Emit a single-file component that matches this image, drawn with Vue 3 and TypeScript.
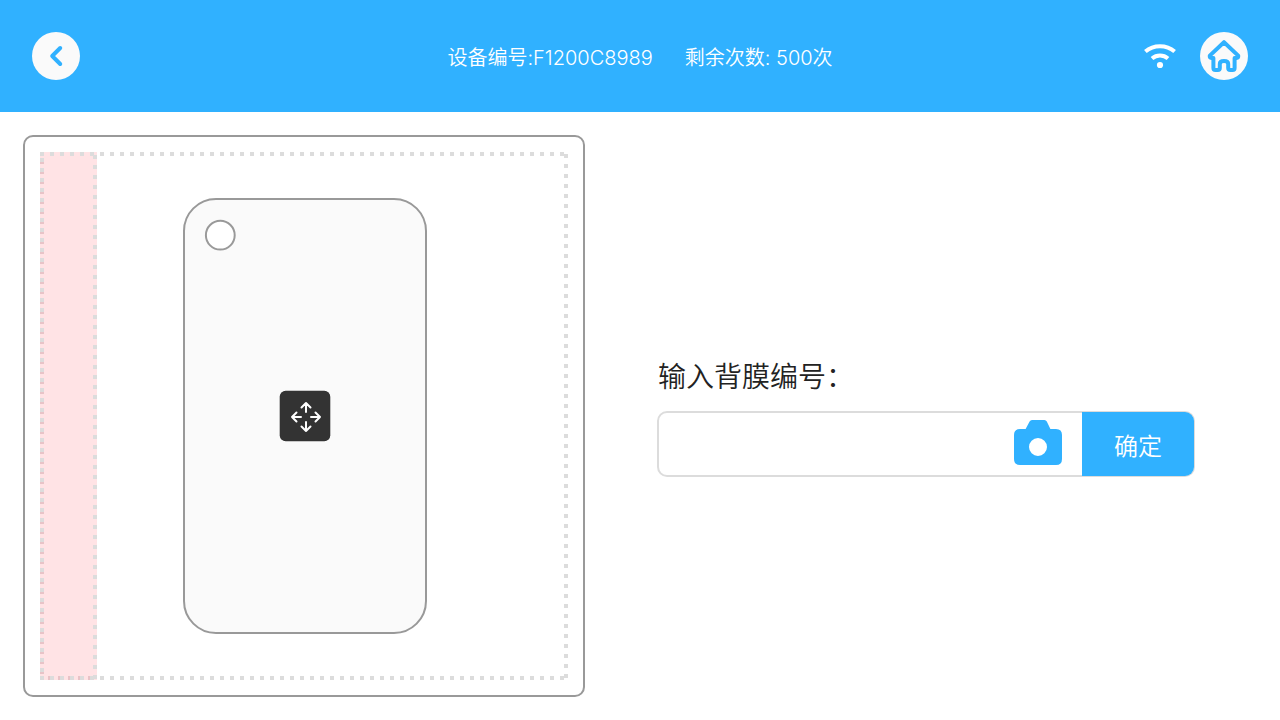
<script setup lang="ts">
import { ref } from 'vue'

const deviceId = 'F1200C8989'
const remaining = 500
const filmCode = ref('')
</script>

<template>
  <div class="page">
    <header class="bar">
      <button class="round" type="button" aria-label="返回">
        <svg viewBox="0 0 48 48" width="48" height="48">
          <path d="M28.2 16L20.2 24L28.2 32" fill="none" stroke="#30b1ff" stroke-width="4" stroke-linecap="round" stroke-linejoin="round" />
        </svg>
      </button>
      <div class="status">
        <span>设备编号:<span class="value">{{ deviceId }}</span></span>
        <span>剩余次数: <span class="value">{{ remaining }}</span>次</span>
      </div>
      <div class="tools">
        <svg class="wifi" viewBox="0 0 32 32" width="32" height="32" aria-hidden="true">
          <g fill="none" stroke="#fff" stroke-width="4">
            <path d="M1.4 11.6C9.6 4.4 22.4 4.4 30.6 11.6" />
            <path d="M8 18.4C12.6 14.4 19.4 14.4 24 18.4" />
          </g>
          <circle cx="16" cy="25" r="3.1" fill="#fff" />
        </svg>
        <button class="round" type="button" aria-label="首页">
          <svg viewBox="0 0 48 48" width="48" height="48">
            <path d="M24 10.2L9.8 23.6Q9.4 26 11.4 26H13.4V36Q13.4 38 15.4 38H17.8Q19.8 38 19.8 36V32Q19.8 29 24 29Q28.2 29 28.2 32V36Q28.2 38 30.2 38H32.6Q34.6 38 34.6 36V26H36.6Q38.6 26 38.2 23.6Z" fill="none" stroke="#30b1ff" stroke-width="4" stroke-linejoin="round" />
          </svg>
        </button>
      </div>
    </header>
    <main class="content">
      <section class="panel">
        <svg class="stage" viewBox="0 0 558 558" aria-label="手机背膜预览">
          <g fill="none" stroke="#dcdcdc" stroke-width="4">
            <path d="M15 17H543" stroke-dasharray="4 6" />
            <path d="M541 17V543" stroke-dasharray="4 6" />
            <path d="M15 541H543" stroke-dasharray="4 6" />
          </g>
          <rect x="15" y="15" width="57" height="528" fill="#ffe3e5" />
          <g fill="none" stroke-width="4">
            <path d="M17 25V539M23 541H72" stroke="#e8c3c7" stroke-dasharray="2 8" />
            <path d="M15 17H72" stroke="#dcdcdc" stroke-dasharray="4 6" />
            <path d="M70 18V543" stroke="#dcdcdc" stroke-dasharray="4 6" />
            <path d="M17 21V543" stroke="#dcdcdc" stroke-dasharray="4 6" />
            <path d="M15 541H72" stroke="#dcdcdc" stroke-dasharray="4 6" />
          </g>
          <rect x="159" y="62" width="242" height="434" rx="32" fill="#fafafa" stroke="#999" stroke-width="2" />
          <circle cx="195.3" cy="98.2" r="14.4" fill="#fff" stroke="#999" stroke-width="2" />
          <rect x="254.7" y="253.7" width="50.6" height="50.6" rx="6" fill="#333" />
          <g fill="none" stroke="#fff" stroke-width="2" stroke-linecap="round" stroke-linejoin="round">
            <path d="M281 275V266M276.5 270.5L281 266L285.5 270.5" />
            <path d="M281 285V294M276.5 289.5L281 294L285.5 289.5" />
            <path d="M276 280H267M271.5 275.5L267 280L271.5 284.5" />
            <path d="M286 280H295M290.5 275.5L295 280L290.5 284.5" />
          </g>
        </svg>
      </section>
      <form class="entry" @submit.prevent>
        <label for="film">输入背膜编号：</label>
        <div class="field">
          <input id="film" v-model="filmCode" type="text" />
          <button class="camera" type="button" aria-label="扫描">
            <svg viewBox="0 2 48 48" width="48" height="48">
              <path fill="#30b1ff" fill-rule="evenodd" d="M11.6 11L15.6 3.5Q16.4 2 18 2H30.4Q32 2 32.8 3.5L36.4 11H42Q48 11 48 17V41Q48 47 42 47H6Q0 47 0 41V17Q0 11 6 11ZM24 20A9 9 0 1 0 24 38A9 9 0 1 0 24 20Z" />
            </svg>
          </button>
          <button class="confirm" type="submit">确定</button>
        </div>
      </form>
    </main>
  </div>
</template>

<style>
body {
  margin: 0;
  background: #fff;
}
</style>

<style scoped>
.page {
  font-family: Inter, "Noto Sans CJK SC", sans-serif;
  font-weight: 350;
  color: #222;
}
button {
  padding: 0;
  border: 0;
  font: inherit;
  cursor: pointer;
}
svg {
  display: block;
}
.bar {
  display: grid;
  grid-template-columns: 1fr auto 1fr;
  align-items: center;
  padding: 32px;
  background: #30b1ff;
  color: #fff;
}
.round {
  width: 48px;
  height: 48px;
  border-radius: 50%;
  background: #fafafa;
}
.status {
  display: flex;
  gap: 32px;
  padding-top: 4px;
  font-size: 20px;
  line-height: 28px;
}
.value {
  font-weight: 300;
}
.tools {
  display: flex;
  justify-content: flex-end;
  align-items: center;
  gap: 24px;
}
.content {
  display: grid;
  grid-template-columns: minmax(0, 562fr) minmax(0, 610fr);
  align-items: center;
  gap: 72px;
  padding: 23px 13px 23px 23px;
}
.panel {
  border: 2px solid #999;
  border-radius: 10px;
}
.stage {
  width: 100%;
}
.entry {
  padding: 2px 72px 0 0;
}
.entry label {
  display: block;
  margin-bottom: 14px;
  padding-left: 1px;
  font-size: 28px;
  line-height: 40px;
}
.field {
  display: flex;
  align-items: center;
  height: 66px;
  box-sizing: border-box;
  border: 2px solid #dcdcdc;
  border-width: 2px 1px 2px 2px;
  border-radius: 10px;
}
.field input {
  flex: 1;
  min-width: 0;
  height: 100%;
  box-sizing: border-box;
  padding: 0 20px;
  border: 0;
  outline: 0;
  background: none;
  font: inherit;
  font-size: 24px;
}
.camera {
  margin-right: 20px;
  background: none;
}
.confirm {
  align-self: stretch;
  width: 112px;
  margin: -1px 0;
  border-radius: 0 9px 9px 0;
  background: #30b1ff;
  color: #fff;
  font-size: 24px;
}
</style>
